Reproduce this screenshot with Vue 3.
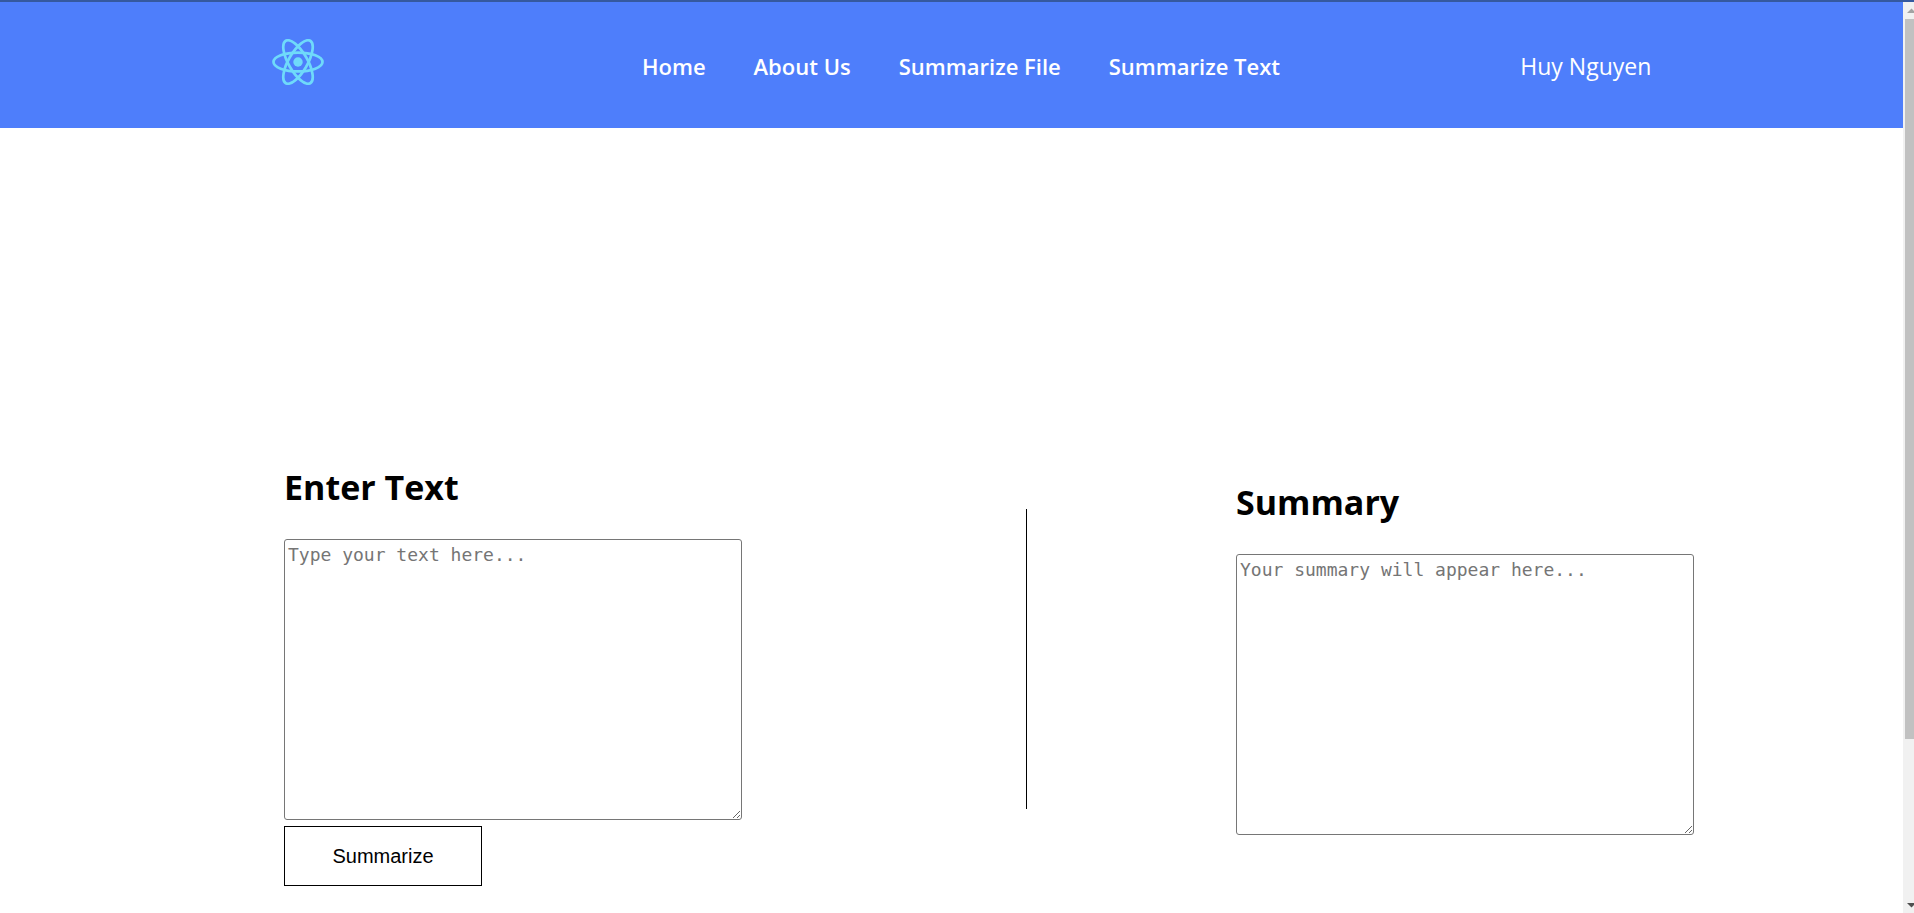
<script setup>
import { ref } from 'vue'

const links = ['Home', 'About Us', 'Summarize File', 'Summarize Text']
const text = ref('')
const summary = ref('')
</script>

<template>
  <div class="window">
    <div class="page">
      <header class="bar">
        <a class="logo" href="#" aria-label="React">
          <svg width="52" height="46" viewBox="-11.5 -10.23 23 20.46" aria-hidden="true">
            <circle r="2.1" fill="#6fdafa" />
            <g fill="none" stroke="#6fdafa" stroke-width="1.2">
              <ellipse rx="10.9" ry="4.2" />
              <ellipse rx="10.9" ry="4.2" transform="rotate(60)" />
              <ellipse rx="10.9" ry="4.2" transform="rotate(120)" />
            </g>
          </svg>
        </a>
        <nav class="nav">
          <a v-for="link in links" :key="link" href="#">{{ link }}</a>
        </nav>
        <div class="user">Huy Nguyen</div>
      </header>

      <main class="board">
        <section class="panel">
          <h2><label for="source">Enter Text</label></h2>
          <textarea id="source" v-model="text" placeholder="Type your text here..."></textarea>
          <button type="button">Summarize</button>
        </section>
        <div class="divider"></div>
        <section class="panel result">
          <h2><label for="summary">Summary</label></h2>
          <textarea id="summary" v-model="summary" placeholder="Your summary will appear here..."></textarea>
        </section>
      </main>
    </div>

    <div class="scroll" aria-hidden="true">
      <div class="track">
        <svg width="17" height="17" viewBox="0 0 17 17"><path d="M4 11h9L8.500 6.500z" fill="#a3a3a3" /></svg>
        <div class="rail"><div class="thumb"></div></div>
        <svg width="17" height="17" viewBox="0 0 17 17"><path d="M4 6h9L8.500 10.500z" fill="#505050" /></svg>
      </div>
    </div>
  </div>
</template>

<style>
body {
  background: #fff;
}
</style>

<style scoped>
.window {
  box-sizing: border-box;
  min-height: 100vh;
  display: grid;
  grid-template-columns: 1fr 11px;
  border-top: 2px solid #35599f;
  font-family: "Segoe UI", "Open Sans", "Noto Sans", sans-serif;
  color: #000;
}

.bar {
  box-sizing: border-box;
  display: grid;
  grid-template-columns: 596fr 729fr 520fr;
  align-items: center;
  height: 126px;
  padding: 2px 3% 0 0;
  background: #4e7efb;
  color: #fff;
  line-height: 32px;
}

.logo {
  justify-self: center;
  padding-bottom: 8px;
}

.logo svg {
  display: block;
}

.nav {
  display: flex;
  justify-content: center;
  gap: 48px;
  font-size: 22px;
  font-weight: 600;
  white-space: nowrap;
}

.nav a {
  color: inherit;
  text-decoration: none;
}

.user {
  justify-self: center;
  font-size: 23px;
  white-space: nowrap;
}

.board {
  display: grid;
  grid-template-columns: 1026fr 1px 876fr;
  align-items: center;
  justify-items: center;
  padding: 303px 0 28px;
}

.panel {
  display: flex;
  flex-direction: column;
  align-items: flex-start;
}

.result {
  padding-bottom: 36px;
}

h2 {
  margin: 32px 0 28px;
  font-size: 34px;
  line-height: 48px;
  font-weight: 700;
}

textarea {
  box-sizing: border-box;
  width: 458px;
  height: 281px;
  padding: 3px;
  border: 1px solid #767676;
  border-radius: 3px;
  background: #fff;
  font-family: Consolas, "DejaVu Sans Mono", monospace;
  font-size: 18px;
  line-height: 24px;
}

textarea::placeholder {
  color: #757575;
}

button {
  margin-top: 6px;
  width: 198px;
  height: 60px;
  border: 1px solid #000;
  background: #fff;
  color: #000;
  font-family: Arial, "Liberation Sans", sans-serif;
  font-size: 20px;
}

.divider {
  width: 1px;
  height: 300px;
  background: #000;
}

.scroll {
  overflow: hidden;
  background: #f1f1f1;
}

.track {
  display: flex;
  flex-direction: column;
  width: 17px;
  height: 100%;
}

.track svg {
  display: block;
}

.rail {
  flex: 1;
  padding: 0 2px;
}

.thumb {
  height: 82%;
  background: #c1c1c1;
}
</style>
